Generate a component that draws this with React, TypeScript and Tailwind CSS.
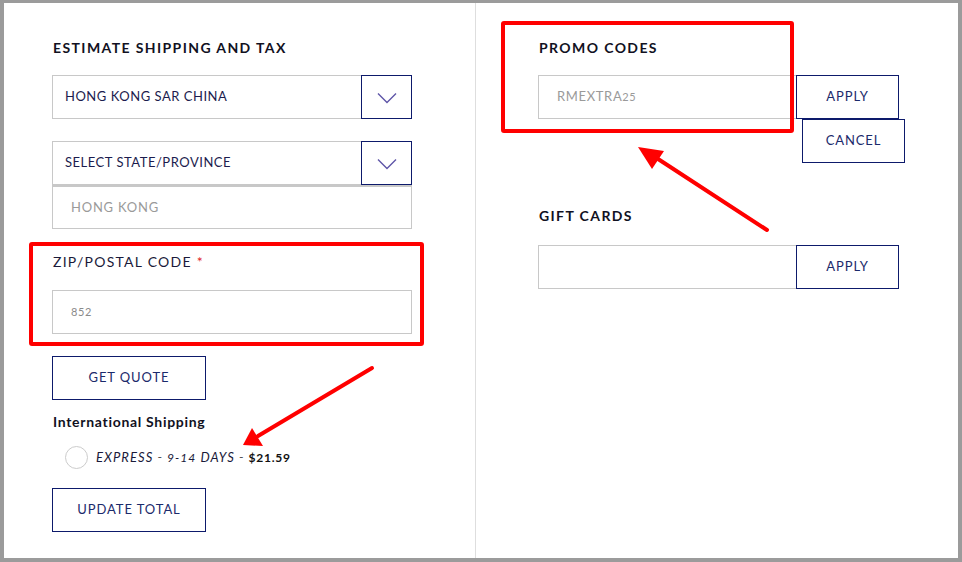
import React from "react";

const font = { fontFamily: "Lato, 'Open Sans', sans-serif" };

function Chevron() {
  return (
    <svg width="20" height="12" viewBox="0 0 20 12" fill="none">
      <path d="M1 1.5 L10 10.5 L19 1.5" stroke="#5f56a8" strokeWidth="1.4" />
    </svg>
  );
}

function SelectBox({ label }: { label: string }) {
  return (
    <div className="flex h-[44px] w-[360px]">
      <div className="flex flex-1 items-center border border-r-0 border-[#c8c8c8] pl-[12px] text-[13px] tracking-[0.04em] text-[#1c1c4e]">
        {label}
      </div>
      <div className="flex w-[51px] items-center justify-center border border-[#0d1a6b] pt-[2px]">
        <Chevron />
      </div>
    </div>
  );
}

function OutlineButton({ label, w }: { label: string; w: string }) {
  return (
    <div
      className={`flex h-[44px] ${w} items-center justify-center border border-[#0d1a6b] text-[13px] tracking-[0.07em] text-[#1b2a6b]`}
    >
      {label}
    </div>
  );
}

export default function App() {
  return (
    <div
      className="relative h-[562px] w-[962px] overflow-hidden border-t-[3px] border-l-[4px] border-r-[4px] border-b-[4px] border-[#9b9b9b] bg-white"
      style={font}
    >
      <div className="flex h-full">
        {/* Left column */}
        <div className="flex w-[472px] flex-col border-r border-[#dedede] pl-[49px] pt-[35px]">
          <div className="h-[20px] text-[14px] font-bold leading-[20px] tracking-[0.1em] text-[#111122]">
            ESTIMATE SHIPPING AND TAX
          </div>
          <div className="-ml-[1px] mt-[17px]">
            <SelectBox label="HONG KONG SAR CHINA" />
          </div>
          <div className="-ml-[1px] mt-[22px]">
            <SelectBox label="SELECT STATE/PROVINCE" />
          </div>
          <div className="-ml-[1px] flex h-[44px] w-[360px] items-center border border-t-2 border-[#c8c8c8] pl-[18px] text-[13px] tracking-[0.06em] text-[#9a9a9a]">
            HONG KONG
          </div>
          <div className="mt-[23px] h-[20px] text-[14px] leading-[20px] tracking-[0.09em] text-[#1a1a3a]">
            ZIP/POSTAL CODE <span className="text-[#e0262b]">*</span>
          </div>
          <div className="-ml-[1px] mt-[18px] flex h-[44px] w-[360px] items-center border border-[#c8c8c8] pl-[18px] text-[11px] tracking-[0.06em] text-[#8a8a8a]">
            852
          </div>
          <div className="-ml-[1px] mt-[22px]">
            <OutlineButton label="GET QUOTE" w="w-[154px]" />
          </div>
          <div className="mt-[12px] h-[20px] text-[14px] font-bold leading-[20px] tracking-[0.05em] text-[#111122]">
            International Shipping
          </div>
          <div className="mt-[14px] flex items-center pl-[12px]">
            <div className="h-[23px] w-[23px] rounded-full border border-[#cccccc]" />
            <div className="ml-[8px] text-[13px] italic tracking-[0.08em] text-[#1a1a3a]">
              EXPRESS <span className="text-[#555]">-</span>{" "}
              <span className="text-[12px]">9-14</span> DAYS{" "}
              <span className="text-[#555]">-</span>{" "}
              <span className="text-[12px] font-bold not-italic tracking-[0.06em] text-[#111]">$21.59</span>
            </div>
          </div>
          <div className="-ml-[1px] mt-[19px]">
            <OutlineButton label="UPDATE TOTAL" w="w-[154px]" />
          </div>
        </div>

        {/* Right column */}
        <div className="flex flex-1 flex-col pl-[62px] pt-[35px]">
          <div className="ml-[1px] h-[20px] text-[14px] font-bold leading-[20px] tracking-[0.1em] text-[#111122]">
            PROMO CODES
          </div>
          <div className="mt-[17px] flex">
            <div className="flex h-[44px] w-[258px] items-center border border-r-0 border-[#c8c8c8] pl-[18px] text-[13px] tracking-[0.05em] text-[#9a9a9a]">
              RMEXTRA<span className="text-[11px]">25</span>
            </div>
            <OutlineButton label="APPLY" w="w-[103px]" />
          </div>
          <div className="ml-[264px]">
            <OutlineButton label="CANCEL" w="w-[103px]" />
          </div>
          <div className="ml-[1px] mt-[43px] h-[20px] text-[14px] font-bold leading-[20px] tracking-[0.1em] text-[#111122]">
            GIFT CARDS
          </div>
          <div className="mt-[19px] flex">
            <div className="h-[44px] w-[258px] border border-r-0 border-[#c8c8c8]" />
            <OutlineButton label="APPLY" w="w-[103px]" />
          </div>
        </div>
      </div>

      {/* Annotation overlays */}
      <div className="pointer-events-none absolute left-[25px] top-[239px] h-[104px] w-[395px] rounded-[3px] border-[4px] border-[#ff0000]" />
      <div className="pointer-events-none absolute left-[497px] top-[18px] h-[112px] w-[293px] rounded-[3px] border-[4px] border-[#ff0000]" />
      <svg
        className="pointer-events-none absolute left-[-4px] top-[-3px]"
        width="962"
        height="562"
        viewBox="0 0 962 562"
      >
        <line x1="767" y1="230" x2="655" y2="157" stroke="#ff0000" strokeWidth="4" strokeLinecap="round" />
        <polygon points="638,147 664,151 652,169" fill="#ff0000" />
        <line x1="372" y1="368" x2="258" y2="436" stroke="#ff0000" strokeWidth="4" strokeLinecap="round" />
        <polygon points="243,445 252,428 263,446" fill="#ff0000" />
      </svg>
    </div>
  );
}
